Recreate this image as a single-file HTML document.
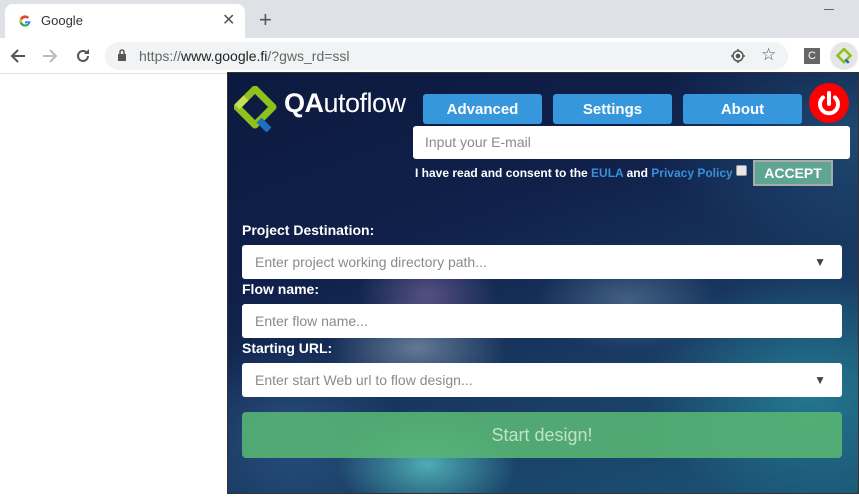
<!DOCTYPE html>
<html><head><meta charset="utf-8"><style>
*{box-sizing:border-box;margin:0;padding:0}
body{width:859px;height:498px;overflow:hidden;background:#fff;font-family:"Liberation Sans",Arial,sans-serif;position:relative}
.abs{position:absolute}
#tabbar{left:0;top:0;width:859px;height:38px;background:#dee1e6}
#tab{left:5px;top:4px;width:240px;height:34px;background:#fff;border-radius:8px 8px 0 0}
#toolbar{left:0;top:38px;width:859px;height:36px;background:#fff;border-bottom:1px solid #ddd}
#omni{left:105px;top:42px;width:683px;height:28px;background:#f1f3f4;border-radius:14px}
#panel{left:227px;top:72px;width:632px;height:422px;border:1px solid #333;overflow:hidden;
background:
radial-gradient(ellipse 90px 55px at 199px 391px,rgba(90,200,200,.8),transparent),
radial-gradient(ellipse 90px 50px at 189px 275px,rgba(150,170,190,.6),transparent),
radial-gradient(ellipse 70px 45px at 199px 221px,rgba(140,110,170,.55),transparent),
radial-gradient(ellipse 90px 50px at 399px 228px,rgba(110,140,170,.5),transparent),
radial-gradient(ellipse 160px 120px at 580px 320px,rgba(40,140,160,.7),transparent),
radial-gradient(ellipse 110px 90px at 60px 360px,rgba(60,110,160,.45),transparent),
radial-gradient(ellipse 200px 120px at 620px 60px,rgba(40,100,140,.55),transparent),
linear-gradient(160deg,#0d1a3f 0%,#10204a 35%,#1a3e66 70%,#1b5575 100%)}
.btn{position:absolute;top:21px;width:119px;height:30px;background:#3797dc;border-radius:3px;color:#fff;font-weight:bold;font-size:15px;text-align:center;line-height:32px}
.inp{position:absolute;left:14px;width:600px;height:34px;background:#fff;border-radius:3px;color:#8a8a8a;font-size:14px;line-height:34px;padding-left:13px}
.lbl{position:absolute;left:14px;color:#fff;font-weight:bold;font-size:14px}
.arr{position:absolute;right:16px;top:0;color:#444;font-size:12px}
</style></head><body>
<div class="abs" id="tabbar"></div>
<div class="abs" id="tab"></div>
<svg class="abs" style="left:18px;top:14px" width="14" height="14" viewBox="0 0 14 14"><path d="M12.5 7.2H7v2.2h3.2A3.4 3.4 0 1 1 9.4 4.7l1.6-1.6A5.6 5.6 0 1 0 12.6 7.2z" fill="#4285f4"/><path d="M2.1 4.3A5.6 5.6 0 0 1 11 3.1L9.4 4.7a3.4 3.4 0 0 0-5.3 1z" fill="#ea4335"/><path d="M1.6 8.5a5.6 5.6 0 0 0 9 2.7L9.2 9.8a3.4 3.4 0 0 1-5.2-1.6z" fill="#34a853"/><path d="M1.6 8.5a5.6 5.6 0 0 1 .5-4.2L4.1 5.7a3.4 3.4 0 0 0 0 2.5z" fill="#fbbc05"/></svg>
<div class="abs" style="left:41px;top:13px;font-size:13px;color:#333">Google</div>
<div class="abs" style="left:222px;top:10px;font-size:16px;color:#555">✕</div>
<div class="abs" style="left:259px;top:7px;font-size:22px;color:#555">+</div>
<div class="abs" style="left:824px;top:9px;width:10px;height:1px;background:#666"></div>
<div class="abs" id="toolbar"></div>
<svg class="abs" style="left:10px;top:48px" width="16" height="16"><path d="M15 8H2M8 2L2 8l6 6" stroke="#555" stroke-width="2" fill="none"/></svg>
<svg class="abs" style="left:42px;top:48px" width="16" height="16"><path d="M1 8h13M8 2l6 6-6 6" stroke="#bbb" stroke-width="2" fill="none"/></svg>
<svg class="abs" style="left:75px;top:48px" width="16" height="16"><path d="M13 8a5 5 0 1 1-1.5-3.6" stroke="#555" stroke-width="2" fill="none"/><path d="M14 1v5H9z" fill="#555"/></svg>
<div class="abs" id="omni"></div>
<svg class="abs" style="left:117px;top:49px" width="10" height="12"><rect x="1" y="5" width="8" height="7" fill="#555"/><path d="M3 5V3a2 2 0 0 1 4 0v2" stroke="#555" stroke-width="1.5" fill="none"/></svg>
<div class="abs" style="left:139px;top:48px;font-size:14px;color:#666">https://<span style="color:#222">www.google.fi</span>/?gws_rd=ssl</div>
<svg class="abs" style="left:730px;top:48px" width="16" height="16"><circle cx="8" cy="8" r="5" stroke="#555" stroke-width="1.5" fill="none"/><circle cx="8" cy="8" r="2.3" fill="#555"/><path d="M8 1v2M8 13v2M1 8h2M13 8h2" stroke="#555" stroke-width="1.5"/></svg>
<div class="abs" style="left:761px;top:45px;font-size:17px;color:#555">☆</div>
<div class="abs" style="left:804px;top:48px;width:16px;height:16px;background:#666;color:#fff;font-size:11px;text-align:center;line-height:16px">C</div>
<div class="abs" style="left:830px;top:42px;width:28px;height:28px;background:#e6e6e6;border-radius:50%"></div>
<svg class="abs" style="left:836px;top:48px" width="16" height="16" viewBox="0 0 44 44"><path d="M22 3L40 21 22 39 4 21z" fill="none" stroke="#8cc21b" stroke-width="7"/><path d="M26 32l9 9" stroke="#1e6fc0" stroke-width="7"/></svg>

<div class="abs" id="panel">
<svg class="abs" style="left:6px;top:13px" width="44" height="46" viewBox="0 0 44 46"><path d="M21 3L39 21 21 39 3 21z" fill="none" stroke="#8cc21b" stroke-width="7" stroke-linejoin="round"/><path d="M3 21l9-9" stroke="#c7e05a" stroke-width="7"/><path d="M25 34l10 10" stroke="#1e6fc0" stroke-width="7"/></svg>
<div class="abs" style="left:56px;top:15px;color:#fff;font-size:27px;letter-spacing:-.5px"><b>QA</b>utoflow</div>
<div class="btn" style="left:195px">Advanced</div>
<div class="btn" style="left:325px">Settings</div>
<div class="btn" style="left:455px">About</div>
<div class="abs" style="left:581px;top:10px;width:40px;height:40px;border-radius:50%;background:#f00"></div>
<svg class="abs" style="left:581px;top:10px" width="40" height="40"><path d="M14 14.5a9 9 0 1 0 12 0" stroke="#fff" stroke-width="4" fill="none" stroke-linecap="round"/><path d="M20 10v11" stroke="#fff" stroke-width="4" stroke-linecap="round"/></svg>
<div class="abs" style="left:185px;top:53px;width:437px;height:33px;background:#fff;border-radius:3px;color:#8a8a8a;font-size:14px;line-height:33px;padding-left:12px">Input your E-mail</div>
<div class="abs" style="left:187px;top:93px;color:#fff;font-weight:bold;font-size:12px">I have read and consent to the <span style="color:#3a8fd8">EULA</span> and <span style="color:#3a8fd8">Privacy Policy</span></div>
<div class="abs" style="left:508px;top:92px;width:11px;height:11px;background:#e8e8e8;border:1px solid #999;border-radius:2px"></div>
<div class="abs" style="left:525px;top:87px;width:80px;height:26px;background:#5fa593;border:2px solid #aaa;color:#fff;font-weight:bold;font-size:14px;text-align:center;line-height:22px">ACCEPT</div>
<div class="lbl" style="top:149px">Project Destination:</div>
<div class="inp" style="top:172px">Enter project working directory path...<span class="arr">▼</span></div>
<div class="lbl" style="top:208px">Flow name:</div>
<div class="inp" style="top:231px">Enter flow name...</div>
<div class="lbl" style="top:267px">Starting URL:</div>
<div class="inp" style="top:290px">Enter start Web url to flow design...<span class="arr">▼</span></div>
<div class="abs" style="left:14px;top:339px;width:600px;height:46px;background:rgba(88,180,115,.9);border-radius:4px;color:#bfe3c9;font-size:18px;text-align:center;line-height:46px">Start design!</div>
</div>
</body></html>
